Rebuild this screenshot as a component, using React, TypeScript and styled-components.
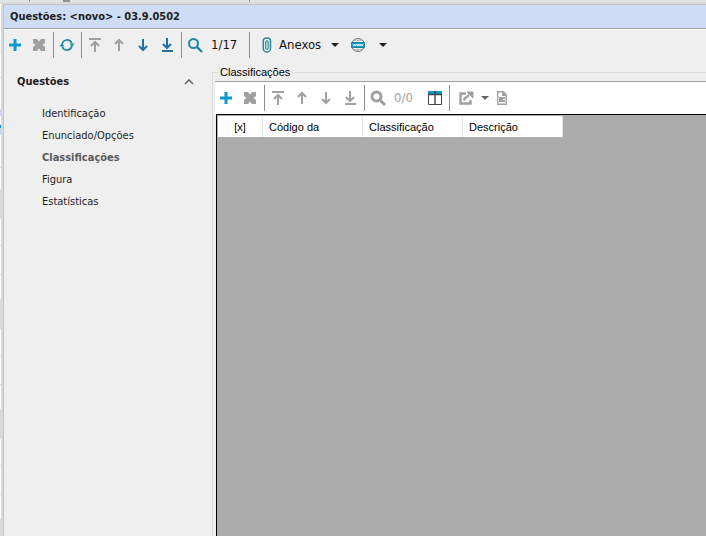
import React from "react";
import styled, { createGlobalStyle } from "styled-components";

const Global = createGlobalStyle`
  *, *::before, *::after { box-sizing: border-box; }
  html, body, #root { height: 100%; margin: 0; }
  body { overflow: hidden; background: #dadada; color: #1e1e1e;
    font: 11px/14px "DejaVu Sans Condensed", "Noto Sans", sans-serif; }
  button { font: inherit; color: inherit; border: 0; padding: 0; margin: 0; background: none; }
`;

const Desktop = styled.div`
  height: 100vh;
  display: grid;
  grid-template: 4px 1fr / 3px 1fr;
`;
const BackTop = styled.div`
  grid-column: 1 / -1;
  display: flex;
  background: #e3e3e3;
  border-bottom: 2px solid #dadada;
`;
const BackMark = styled.span<{ $gap: number; $w: number }>`
  width: ${(p) => p.$w}px;
  margin-left: ${(p) => p.$gap}px;
  background: #8b9496;
`;
const BackRows = styled.div`
  display: flex;
  flex-direction: column;
  overflow: hidden;
  width: 1px;
`;
const BackRow = styled.span<{ $h: number; $fill: string }>`
  flex: 0 0 ${(p) => p.$h}px;
  background: ${(p) => p.$fill};
  border-bottom: 1px solid #dadada;
`;
const Window = styled.main`
  display: flex;
  flex-direction: column;
  min-width: 0;
  background: #efefef;
  border-top: 1px solid #c3c3c3;
  border-left: 1px solid #c3c3c3;
`;
const TitleBar = styled.h1`
  margin: 0;
  height: 24px;
  padding: 0 6px;
  font-size: 11px;
  line-height: 24px;
  background: #cedcf6;
  border-bottom: 1px solid #a0a0a0;
`;
const Toolbar = styled.div<{ $white?: boolean }>`
  display: flex;
  align-items: center;
  flex: none;
  height: ${(p) => (p.$white ? 33 : 32)}px;
  padding-bottom: ${(p) => (p.$white ? 0 : 1)}px;
  background: ${(p) => (p.$white ? "#fff" : "#efefef")};
  border-top: 1px solid ${(p) => (p.$white ? "#a0a0a0" : "#fff")};
`;
const Tool = styled.button<{ $w?: number }>`
  display: flex;
  align-items: center;
  justify-content: center;
  width: ${(p) => p.$w ?? 24}px;
  height: 24px;
  svg { display: block; }
`;
const EdgeTool = styled(Tool)`
  width: 23px;
  padding-right: 1px;
`;
const Divider = styled.span`
  width: 1px;
  height: 26px;
  margin: 0 1px 0 2px;
  background: #8c8c8c;
`;
const Counter = styled.span<{ $w: number; $off?: boolean }>`
  width: ${(p) => p.$w}px;
  padding-left: 4px;
  font-size: 13px;
  color: ${(p) => (p.$off ? "#a0a0a0" : "#111")};
`;
const TextTool = styled(Tool)`
  width: auto;
  gap: 7px;
  padding: 0 4px 0 11px;
  font-size: 13px;
  color: #111;
`;
const Body = styled.div`
  flex: 1;
  display: grid;
  grid-template-columns: 208px 1fr;
`;
const Nav = styled.nav`
  padding-top: 11px;
`;
const NavHead = styled.button`
  display: flex;
  align-items: center;
  justify-content: space-between;
  width: 100%;
  height: 20px;
  padding: 0 18px 0 13px;
  && { font-weight: bold; }
`;
const NavList = styled.ul`
  list-style: none;
  margin: 11px 0 0;
  padding: 0;
`;
const NavLink = styled.a<{ $active?: boolean }>`
  display: block;
  padding-left: 38px;
  line-height: 22px;
  text-decoration: none;
  color: ${(p) => (p.$active ? "#5a5a5a" : "#1e1e1e")};
  font-weight: ${(p) => (p.$active ? "bold" : "normal")};
`;
const Group = styled.fieldset`
  display: flex;
  flex-direction: column;
  min-width: 0;
  margin: 4px 0 0;
  padding: 2px 0 0 2px;
  border: solid #dcdcdc;
  border-width: 1px 0 0 1px;
`;
const Legend = styled.legend`
  margin-left: 3px;
  padding: 0 2px;
  font: 11px/14px "Liberation Sans", Arial, sans-serif;
  color: #000;
`;
const GridArea = styled.div`
  flex: 1;
  margin-left: 1px;
  padding: 1px 0 0 1px;
  background: #ababab;
  border: solid #000;
  border-width: 1px 0 0 1px;
`;
const Table = styled.table`
  table-layout: fixed;
  width: 345px;
  border-collapse: separate;
  border-spacing: 0;
  font: 11px/14px "Liberation Sans", Arial, sans-serif;
  color: #000;
`;
const Th = styled.th<{ $mark?: boolean }>`
  width: ${(p) => (p.$mark ? 45 : 100)}px;
  height: 21px;
  padding: 0 0 0 ${(p) => (p.$mark ? 0 : 6)}px;
  background: #fff;
  border-right: 1px solid #e5e5e5;
  font-weight: normal;
  text-align: ${(p) => (p.$mark ? "center" : "left")};
`;

const GREY = "#a0a0a0";
const BLUE = "#0e98cc";
const TEAL = "#1f86a3";
const NAVY = "#20749a";

const Plus = () => (
  <svg width="12" height="12" viewBox="0 0 12 12"><path d="M6 0v12M0 6h12" stroke={BLUE} strokeWidth="3" /></svg>
);
const Cross = () => (
  <svg width="12" height="12" viewBox="0 0 12 12">
    <path d="M0 0h4l2 2.500L8 0h4v4L9.500 6 12 8v4H8L6 9.500 4 12H0V8l2.500-2L0 4z" fill={GREY} />
  </svg>
);
const Refresh = () => (
  <svg width="16" height="16" viewBox="0 0 16 16" fill="none" stroke={TEAL} strokeWidth="1.7">
    <path d="M3.200 7A5 5 0 0 1 12.700 6M12.800 9A5 5 0 0 1 3.300 10" />
    <path d="M.5 9.500h5L3 6.200zM10.500 6.500h5L13 9.800z" fill={TEAL} stroke="none" />
  </svg>
);
type ArrowProps = { up?: boolean; bar?: boolean; color?: string };
const Arrow = ({ up, bar, color = GREY }: ArrowProps) => (
  <svg width="16" height="16" viewBox="0 0 16 16" fill="none" stroke={color} strokeWidth="2">
    {up ? (
      <path d={bar ? "M8 15V5M4 9l4-4 4 4" : "M8 14V3M4 7l4-4 4 4"} />
    ) : (
      <path d={bar ? "M8 1v10M4 7l4 4 4-4" : "M8 2v11M4 9l4 4 4-4"} />
    )}
    {bar && <path d={up ? "M2 2h12" : "M3 14h11"} />}
  </svg>
);
const Search = ({ color = TEAL, bold }: { color?: string; bold?: boolean }) => (
  <svg width="16" height="16" viewBox="0 0 16 16" fill="none" stroke={color}>
    <circle cx="6.500" cy="6.500" r="4.500" strokeWidth={bold ? 3 : 2} />
    <path d="M10 10l5 5" strokeWidth={bold ? 3 : 2.4} />
  </svg>
);
const Clip = () => (
  <svg width="10" height="16" viewBox="0 0 10 16" fill="none" stroke="#2b8799" strokeWidth="1.5">
    <path d="M1.300 4v7.500a3.500 3.500 0 0 0 7.200 0V4a3.600 3 0 0 0-7.200 0" />
    <path d="M3.700 5v6a1.200 1.200 0 0 0 2.500 0V5a1.200 1.200 0 0 0-2.500 0" strokeWidth="1.200" />
  </svg>
);
const Caret = ({ color = "#222" }: { color?: string }) => (
  <svg width="8" height="4" viewBox="0 0 8 4"><path d="M0 0h8L4 4z" fill={color} /></svg>
);
const Globe = () => (
  <svg width="16" height="16" viewBox="0 0 16 16" fill="none" stroke="#666">
    <circle cx="8" cy="8" r="6.500" fill="#f6f6f6" />
    <path d="M8 1.500v13M4 3.500h8M4 12.500h8" stroke="#aaa" strokeWidth=".7" />
    <path d="M1.500 5.500h13v5h-13z" fill={BLUE} stroke={TEAL} />
    <path d="M3 7l1 2 .8-2 .8 2 .7-2M6.600 7l.8 2 .8-2 .8 2 .6-2M10 7l.8 2 .8-2 .7 2 .8-2" stroke="#fff" strokeWidth=".8" />
  </svg>
);
const Columns = () => (
  <svg width="14" height="14" viewBox="0 0 14 14">
    <path d="M.5.5h13v13H.5z" fill="#fff" stroke="#444" />
    <path d="M0 0h14v3H0z" fill={BLUE} />
    <path d="M0 3.500h14M7 0v14" stroke="#444" strokeWidth="1.400" />
  </svg>
);
const Export = () => (
  <svg width="16" height="16" viewBox="0 0 16 16" fill="none" stroke={GREY}>
    <path d="M8 3.500H2.500v10h10V10" strokeWidth="2.400" />
    <path d="M6.500 10.500V8.500L11 5" strokeWidth="2.400" />
    <path d="M9 2h6v6z" fill={GREY} />
  </svg>
);
const Doc = () => (
  <svg width="10" height="14" viewBox="0 0 10 14">
    <path d="M.7.7h5.600l3 3v9.600H.7z" fill="#fff" stroke={GREY} strokeWidth="1.400" />
    <path d="M5 0v5h5zM2 6h6v5H2z" fill={GREY} />
    <path d="M6 8h2v1H6z" fill="#fff" />
  </svg>
);
const Chevron = () => (
  <svg width="10" height="6" viewBox="0 0 10 6"><path d="M1 5l4-4 4 4" fill="none" stroke="#666" strokeWidth="1.600" /></svg>
);

const EditTools = ({ active }: { active?: boolean }) => (
  <>
    <EdgeTool aria-label="Adicionar"><Plus /></EdgeTool>
    <Tool aria-label="Excluir"><Cross /></Tool>
    <Divider />
    {active && (
      <>
        <Tool aria-label="Atualizar"><Refresh /></Tool>
        <Divider />
      </>
    )}
    <Tool aria-label="Primeiro"><Arrow up bar /></Tool>
    <Tool aria-label="Anterior"><Arrow up /></Tool>
    <Tool aria-label="Próximo"><Arrow color={active ? NAVY : GREY} /></Tool>
    <Tool aria-label="Último"><Arrow bar color={active ? NAVY : GREY} /></Tool>
    <Divider />
    <Tool aria-label="Pesquisar"><Search color={active ? TEAL : GREY} bold={!active} /></Tool>
  </>
);

const WHITE = "#ffffff";
const PANEL = "#dadada";
const block: [number, string][] = [[29, PANEL], [27, WHITE], [29, WHITE], [25, WHITE]];
const backRows: [number, string][] = [
  [48, WHITE], [26, WHITE], [32, WHITE], [6, "#c5d4f2"], [9, WHITE], [4, "#0f8fc4"],
  [6, "#c5d4f2"], [33, WHITE], [22, WHITE],
  ...block, ...block, ...block, ...block,
];

const pages = ["Identificação", "Enunciado/Opções", "Classificações", "Figura", "Estatísticas"];

export default function App() {
  return (
    <>
      <Global />
      <Desktop>
        <BackTop aria-hidden>
          <BackMark $gap={29} $w={1} />
          <BackMark $gap={33} $w={7} />
          <BackMark $gap={179} $w={1} />
        </BackTop>
        <BackRows aria-hidden>
          {backRows.map(([h, fill], i) => <BackRow key={i} $h={h} $fill={fill} />)}
        </BackRows>
        <Window>
          <TitleBar>Questões: &lt;novo&gt; - 03.9.0502</TitleBar>
          <Toolbar role="toolbar">
            <EditTools active />
            <Counter $w={40}>1/17</Counter>
            <Divider />
            <TextTool><Clip />Anexos</TextTool>
            <Tool $w={20} aria-label="Opções de anexos"><Caret /></Tool>
            <Tool $w={26} aria-label="Web"><Globe /></Tool>
            <Tool aria-label="Opções da web"><Caret /></Tool>
          </Toolbar>
          <Body>
            <Nav>
              <NavHead>Questões<Chevron /></NavHead>
              <NavList>
                {pages.map((p) => (
                  <li key={p}><NavLink href="#" $active={p === "Classificações"}>{p}</NavLink></li>
                ))}
              </NavList>
            </Nav>
            <Group>
              <Legend>Classificações</Legend>
              <Toolbar $white role="toolbar">
                <EditTools />
                <Counter $w={33} $off>0/0</Counter>
                <Tool aria-label="Colunas"><Columns /></Tool>
                <Divider />
                <Tool $w={30} aria-label="Exportar"><Export /></Tool>
                <Tool $w={8} aria-label="Opções de exportação"><Caret color="#666" /></Tool>
                <Tool $w={26} aria-label="Relatório"><Doc /></Tool>
              </Toolbar>
              <GridArea>
                <Table>
                  <thead>
                    <tr>
                      <Th $mark>[x]</Th>
                      <Th>Código da</Th>
                      <Th>Classificação</Th>
                      <Th>Descrição</Th>
                    </tr>
                  </thead>
                </Table>
              </GridArea>
            </Group>
          </Body>
        </Window>
      </Desktop>
    </>
  );
}
